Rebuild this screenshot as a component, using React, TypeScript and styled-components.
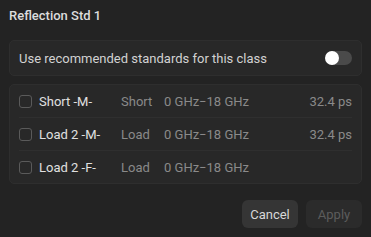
import styled, { createGlobalStyle } from "styled-components";

const GlobalStyle = createGlobalStyle`
  html, body {
    margin: 0;
    padding: 0;
    background: #232323;
  }
  body {
    font-family: Roboto, "Noto Sans", sans-serif;
    -webkit-font-smoothing: antialiased;
  }
`;

const Dialog = styled.div`
  width: 371px;
  height: 237px;
  box-sizing: border-box;
  padding: 7px 9px 9px;
  display: flex;
  flex-direction: column;
  background: #232323;
`;

const Title = styled.div`
  font-size: 13px;
  font-weight: 500;
  color: #dcdcdc;
  height: 18px;
  line-height: 18px;
  margin-bottom: 15px;
`;

const Panel = styled.div`
  background: #282828;
  border: 1px solid #2e2e2e;
  border-radius: 5px;
  padding: 0 9px;
`;

const OptionRow = styled.div`
  height: 34px;
  display: flex;
  align-items: center;
  justify-content: space-between;
  font-size: 13px;
  color: #d2d2d2;
`;

const Toggle = styled.div`
  width: 26px;
  height: 14px;
  border-radius: 7px;
  background: #4a4a4a;
  position: relative;
`;

const Knob = styled.div`
  position: absolute;
  left: -1px;
  top: 0;
  width: 14px;
  height: 14px;
  border-radius: 50%;
  background: #ffffff;
`;

const ListPanel = styled(Panel)`
  margin-top: 8px;
`;

const Row = styled.div<{ $last?: boolean }>`
  height: 32px;
  display: flex;
  align-items: center;
  font-size: 13px;
  border-bottom: ${(p) => (p.$last ? "none" : "1px solid #2f2f2f")};
`;

const Checkbox = styled.div`
  width: 11px;
  height: 11px;
  border: 1px solid #5a5a5a;
  border-radius: 3px;
  margin-right: 7px;
  flex-shrink: 0;
`;

const Name = styled.span`
  width: 82px;
  color: #e0e0e0;
`;

const Kind = styled.span`
  width: 43px;
  color: #8a8a8a;
`;

const Freq = styled.span`
  flex: 1;
  color: #8a8a8a;
`;

const Delay = styled.span`
  color: #8a8a8a;
`;

const Footer = styled.div`
  margin-top: auto;
  display: flex;
  justify-content: flex-end;
  gap: 8px;
`;

const Button = styled.button<{ $disabled?: boolean }>`
  height: 28px;
  width: 56px;
  padding: 0;
  border: none;
  border-radius: 6px;
  font-family: Roboto, "Noto Sans", sans-serif;
  font-size: 13px;
  background: ${(p) => (p.$disabled ? "#2b2b2b" : "#353535")};
  color: ${(p) => (p.$disabled ? "#5c5c5c" : "#d8d8d8")};
`;

const items = [
  { name: "Short -M-", kind: "Short", freq: "0 GHz\u221218 GHz", delay: "32.4 ps" },
  { name: "Load 2 -M-", kind: "Load", freq: "0 GHz\u221218 GHz", delay: "32.4 ps" },
  { name: "Load 2 -F-", kind: "Load", freq: "0 GHz\u221218 GHz", delay: "" },
];

const App = () => {
  return (
    <>
      <GlobalStyle />
      <Dialog>
        <Title>Reflection Std 1</Title>
        <Panel>
          <OptionRow>
            <span>Use recommended standards for this class</span>
            <Toggle>
              <Knob />
            </Toggle>
          </OptionRow>
        </Panel>
        <ListPanel>
          {items.map((it, i) => (
            <Row key={it.name} $last={i === items.length - 1}>
              <Checkbox />
              <Name>{it.name}</Name>
              <Kind>{it.kind}</Kind>
              <Freq>{it.freq}</Freq>
              <Delay>{it.delay}</Delay>
            </Row>
          ))}
        </ListPanel>
        <Footer>
          <Button>Cancel</Button>
          <Button $disabled>Apply</Button>
        </Footer>
      </Dialog>
    </>
  );
};

export default App;
